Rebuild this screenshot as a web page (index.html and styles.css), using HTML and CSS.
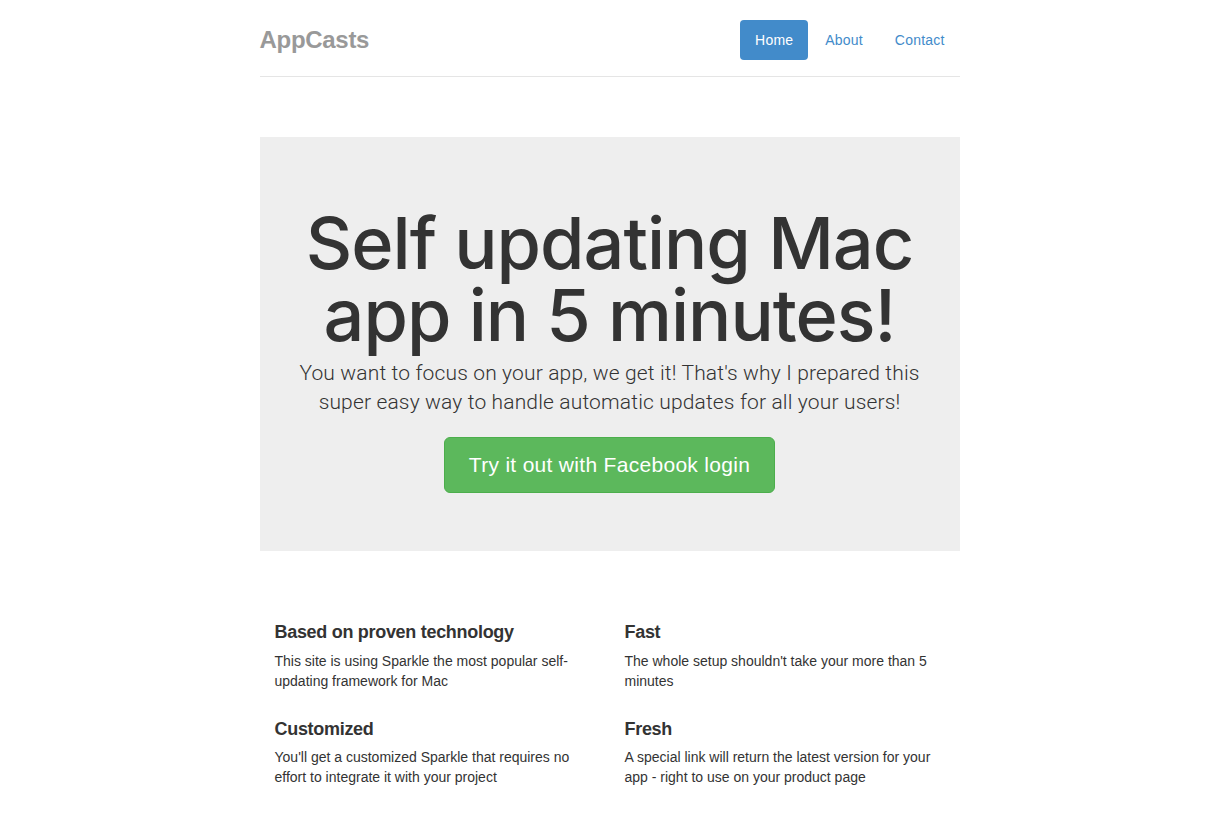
FILE: index.html
```html
<!DOCTYPE html>
<html lang="en">
<head>
<meta charset="utf-8">
<title>AppCasts</title>
<link rel="stylesheet" href="styles.css">
</head>
<body>
<div class="container">
  <div class="header">
    <ul class="nav-pills">
      <li><a class="pill active" href="#">Home</a></li>
      <li><a class="pill" href="#">About</a></li>
      <li><a class="pill" href="#">Contact</a></li>
    </ul>
    <h3 class="logo">AppCasts</h3>
  </div>

  <div class="jumbotron">
    <h1 class="headline">Self updating Mac app in 5 minutes!</h1>
    <p class="lead">You want to focus on your app, we get it! That's why I prepared this super easy way to handle automatic updates for all your users!</p>
    <div class="cta-wrap">
      <a class="btn-cta" href="#">Try it out with Facebook login</a>
    </div>
  </div>

  <div class="marketing">
    <div class="col">
      <h4 class="feat-title">Based on proven technology</h4>
      <p class="feat-text">This site is using Sparkle the most popular self-updating framework for Mac</p>
      <h4 class="feat-title">Customized</h4>
      <p class="feat-text">You'll get a customized Sparkle that requires no effort to integrate it with your project</p>
    </div>
    <div class="col">
      <h4 class="feat-title">Fast</h4>
      <p class="feat-text">The whole setup shouldn't take your more than 5 minutes</p>
      <h4 class="feat-title">Fresh</h4>
      <p class="feat-text">A special link will return the latest version for your app - right to use on your product page</p>
    </div>
  </div>
</div>
</body>
</html>
```

FILE: styles.css
```css
* { box-sizing: border-box; }

html, body {
  margin: 0;
  padding: 0;
  background: #fff;
}

body {
  padding-top: 20px;
  font-family: "Liberation Sans", Arial, Helvetica, sans-serif;
  font-size: 14px;
  line-height: 1.428571429;
  color: #333;
}

.container {
  max-width: 730px;
  margin: 0 auto;
  padding: 0 15px;
}

/* Header */
.header {
  display: flex;
  flex-direction: row-reverse;
  justify-content: space-between;
  align-items: flex-start;
  padding-bottom: 16px;
  border-bottom: 1px solid #e5e5e5;
  margin-bottom: 60px;
}

.logo {
  margin: 0;
  font-size: 24px;
  line-height: 40px;
  font-weight: bold;
  color: #999;
  letter-spacing: -0.3px;
}

.nav-pills {
  list-style: none;
  margin: 0;
  padding: 0;
  display: flex;
  gap: 2px;
}

.pill {
  display: block;
  padding: 10px 15px;
  line-height: 20px;
  font-size: 14px;
  color: #428bca;
  text-decoration: none;
  border-radius: 4px;
  letter-spacing: 0.2px;
}

.pill.active {
  background: #428bca;
  color: #fff;
}

/* Jumbotron */
.jumbotron {
  background: #eee;
  text-align: center;
  padding: 48px 30px 58px;
}

.headline {
  margin: 22px 0 8px;
  font-family: Inter, "Liberation Sans", sans-serif;
  font-size: 72px;
  line-height: 72px;
  font-weight: 500;
  color: #333;
  letter-spacing: -1px;
}

.lead {
  margin: 0 0 19px;
  font-family: Roboto, "Liberation Sans", sans-serif;
  font-size: 21px;
  line-height: 1.4;
  font-weight: 300;
  color: #333;
  letter-spacing: 0.15px;
}

.cta-wrap {
  display: flex;
  justify-content: center;
}

.btn-cta {
  display: block;
  padding: 14px 24px;
  font-size: 21px;
  line-height: 26px;
  color: #fff;
  background: #5cb85c;
  border: 1px solid #4cae4c;
  border-radius: 6px;
  text-decoration: none;
  letter-spacing: 0.3px;
}

/* Marketing */
.marketing {
  display: grid;
  grid-template-columns: 1fr 1fr;
  margin-top: 62px;
}

.col {
  padding: 0 15px;
}

.feat-title {
  margin: 29px 0 8px;
  font-size: 18px;
  line-height: 1.1;
  font-weight: bold;
  color: #333;
  letter-spacing: -0.3px;
}

.col .feat-title:first-child {
  margin-top: 10px;
}

.feat-text {
  margin: 0 0 10px;
  font-size: 14px;
  line-height: 20px;
  color: #333;
}
```
